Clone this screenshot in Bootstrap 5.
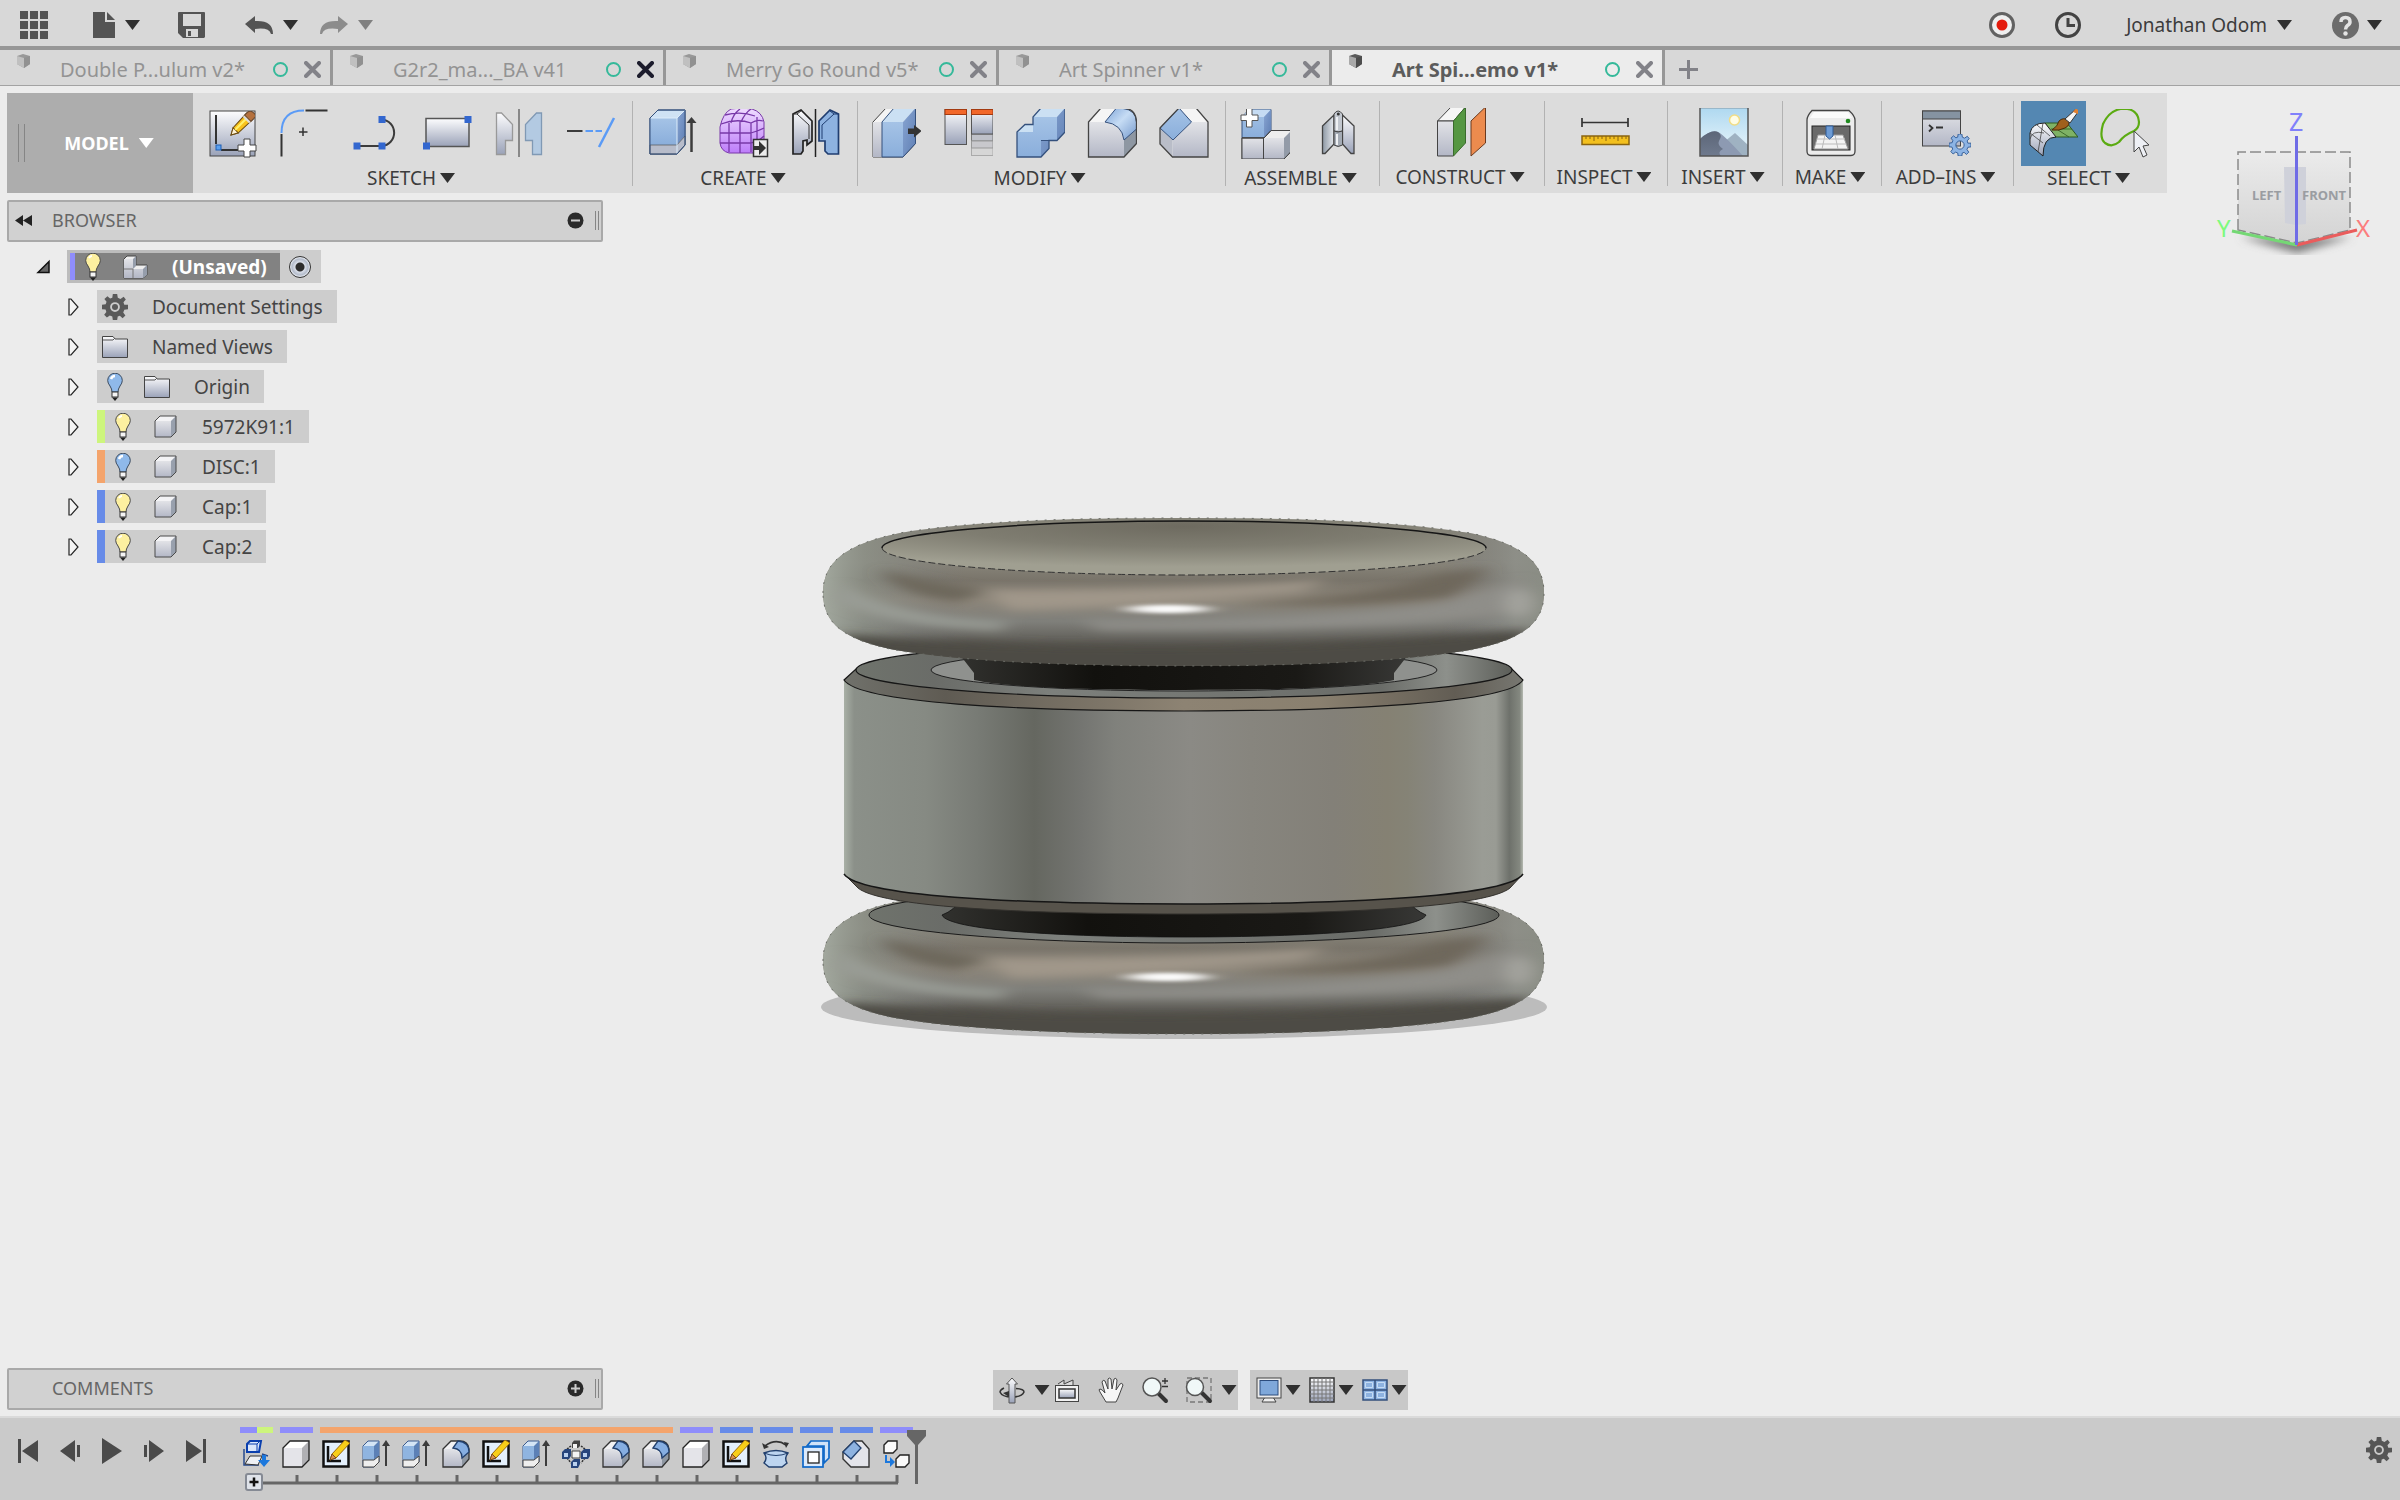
<!DOCTYPE html>
<html lang="en">
<head>
<meta charset="utf-8">
<meta name="viewport" content="width=device-width, initial-scale=1">
<title>Art Spinner Demo v1</title>
<link href="https://cdn.jsdelivr.net/npm/bootstrap@5.3.0/dist/css/bootstrap.min.css" rel="stylesheet">
<style>
  body { font-family: "Noto Sans", "Open Sans", sans-serif; font-size: 19px; line-height: 24px; color: #3c3c3c; background: #ececec; }
  svg { display: block; overflow: visible; flex: none; }
  .plain { padding: 0; border: 0; background: none; color: inherit; font: inherit; line-height: 24px; }
  .tri { width: 15px; height: 10px; background: #303030; clip-path: polygon(0 0, 100% 0, 50% 100%); flex: none; }
  .tri-faint { background: #808080; }
  .tri-apart { margin-left: 10px; }

  .app-bar { height: 50px; background: #d8d8d8; border-bottom: 4px solid #979797; padding: 4px 18px 0 20px; }
  .gap-file { margin-left: 45px; }
  .gap-save { margin-left: 38px; }
  .gap-undo { margin-left: 40px; }
  .gap-redo { margin-left: 22px; }

  .doc-tabs { height: 36px; background: #d8d8d8; border-bottom: 1px solid #a3a3a3; font-size: 20px; color: #939393; }
  .doc-tab { flex: 0 1 333px; min-width: 0; padding: 4px 9px 0 17px; border-right: 3px solid #979797; }
  .doc-tab.current { background: #ececec; color: #5c5c5c; font-weight: 700; }
  .doc-tab .cube { align-self: flex-start; opacity: .5; }
  .doc-tab.current .cube { opacity: 1; }
  .doc-tab a { color: inherit; text-decoration: none; margin-left: 30px; white-space: nowrap; }
  .sync { width: 15px; height: 15px; border: 2px solid #35b99a; border-radius: 50%; margin-right: 16px; flex: none; }
  .close-x { color: #828288; }
  .close-dark { color: #1c1c2c; }
  .new-tab { color: #828288; margin-left: 14px; padding-top: 4px; }

  .stage { min-height: 0; padding: 7px 7px 6px; }
  .ribbon { align-self: flex-start; height: 100px; background: #dcdcdc; }
  .workspace { width: 186px; background: #adadad; padding-left: 11px; color: #fff; font-size: 18px; font-weight: 700; }
  .workspace .tri { background: #fff; }
  .grip { width: 7px; height: 38px; border: solid #858585; border-width: 0 1px; }
  .tools { padding: 8px 3px 4px 0; position: relative; }
  .tools + .tools::before { content: ""; position: absolute; left: 0; top: 8px; width: 1px; height: 85px; background: #b2b2b2; }
  .tool { width: 65px; height: 65px; margin: 0 3px 0 4px; }
  .tool.on { background: #5487b2; }
  .tool svg { width: 50px; height: 50px; margin: auto; }
  .w-sketch { width: 439px; } .w-create { width: 225px; } .w-modify { width: 368px; }
  .w-pair { width: 154px; } .w-construct { width: 165px; } .w-inspect { width: 123px; }
  .w-insert { width: 115px; } .w-make { width: 99px; } .w-addins { width: 132px; }

  .view-cube { position: absolute; right: 25px; top: 20px; }
  .model { position: absolute; left: calc(50% - 400px); top: calc(50% - 245px); }

  .browser-pane { margin-top: 7px; }
  .palette { width: 596px; height: 42px; background: #d1d1d1; border: 2px solid #a9a9a9; border-radius: 2px; color: #666; font-size: 18px; padding: 0 2px 2px 6px; }
  .palette-name { width: 37px; }
  .palette .grip { width: 4px; height: 19px; margin-left: 11px; }

  .tree { margin: 8px 0 0 30px; gap: 7px; }
  .tree-row { height: 33px; }
  .kids { margin-left: 31px; }
  .chip { height: 33px; background: #cdcdcd; padding-right: 14px; color: #444; }
  .twist { width: 29px; }
  .twist-root { width: 30px; }
  .slot { width: 26px; margin-left: 5px; display: flex; justify-content: center; }
  .slot + .slot { margin-left: 16px; }
  .chip-text { margin-left: 24px; white-space: nowrap; }
  .stripe { width: 8px; align-self: stretch; }
  .root-chip { background: #bcbcbc; padding: 3px 0 3px 3px; height: 33px; }
  .root-name { background: #828282; color: #fff; font-weight: 700; height: 27px; padding-right: 13px; }
  .root-name .stripe { width: 5px; }
  .root-end { background: #cdcdcd; width: 41px; height: 33px; }
  .activate { appearance: none; width: 22px; height: 22px; margin: 0; border: 1px solid #333; border-radius: 50%; background: radial-gradient(circle, #2d2d2d 0 4px, #d9dee8 5px, #b4bccb 8px, #eef1f6 10px); }
  .c-violet { background: #8f8dfb; } .c-lime { background: #cdf57d; }
  .c-orange { background: #f4a46c; } .c-blue { background: #678be8; }

  .dock { display: grid; grid-template-columns: 1fr auto 1fr; align-items: end; }
  .nav-strip { height: 40px; background: #c8c8c8; padding: 0 1px 0 6px; }
  .nav-strip svg { width: 26px; height: 26px; }
  .nav-step { margin-left: 18px; }

  .history { height: 84px; background: #cacaca; border-top: 2px solid #dadada; padding: 0 8px 0 18px; }
  .play { gap: 22px; margin-top: 21px; color: #4a4a4a; }
  .timeline { margin-left: 34px; position: relative; padding-top: 9px; }
  .bars { gap: 7px; height: 6px; }
  .bars > div { width: 33px; }
  .bars > .span-nine { width: 353px; }
  .steps { margin-top: 7px; height: 28px; }
  .steps button { width: 40px; padding-left: 2px; }
  .marker { position: absolute; left: 667px; top: 12px; }
  .gear-btn { margin: 19px 0 0 auto; align-self: flex-start; }
</style>
</head>
<body class="vh-100 d-flex flex-column overflow-hidden">

<svg width="0" height="0" class="position-absolute" aria-hidden="true">
  <defs>
    <linearGradient id="gSteel" x1="0" y1="0" x2="0" y2="1"><stop offset="0" stop-color="#fdfdfe"/><stop offset="1" stop-color="#9aa2b8"/></linearGradient>
    <linearGradient id="gGrey" x1="0" y1="0" x2="0" y2="1"><stop offset="0" stop-color="#e2e3e7"/><stop offset="1" stop-color="#b3b7c6"/></linearGradient>
    <linearGradient id="gBlue" x1="0" y1="0" x2="0" y2="1"><stop offset="0" stop-color="#a5c3e6"/><stop offset="1" stop-color="#8aaedb"/></linearGradient>
    <linearGradient id="gBlueSide" x1="0" y1="0" x2="1" y2="1"><stop offset="0" stop-color="#88a5d2"/><stop offset="1" stop-color="#5f7fb4"/></linearGradient>
    <linearGradient id="gPurple" x1="0" y1="0" x2="0" y2="1"><stop offset="0" stop-color="#efdcff"/><stop offset="1" stop-color="#bd7dfa"/></linearGradient>
    <linearGradient id="gSky" x1="0" y1="0" x2="0" y2="1"><stop offset="0" stop-color="#aed8f0"/><stop offset="1" stop-color="#eef8fc"/></linearGradient>
    <linearGradient id="gHill" x1="0" y1="0" x2="0" y2="1"><stop offset="0" stop-color="#5c6678"/><stop offset="1" stop-color="#6f7a8e"/></linearGradient>
    <linearGradient id="gWing"><stop offset="0" stop-color="#8d98a4"/><stop offset="1" stop-color="#e6e9ee"/></linearGradient>
    <linearGradient id="gFillet" x1="0" y1="0" x2="1" y2="1"><stop offset="0" stop-color="#7fa5d8"/><stop offset=".45" stop-color="#c6dcf4"/><stop offset="1" stop-color="#7398cc"/></linearGradient>

    <symbol id="cube12" viewBox="0 0 13 14"><path d="M0 2 6 0 13 2V10L7 14 0 10Z" fill="#5a5a5a"/><path d="M0 2 7 4V14L0 10Z" fill="#a9a9a9"/><path d="M7 4 13 2V10L7 14Z" fill="#4d4d4d"/></symbol>
    <symbol id="xmark" viewBox="0 0 17 17"><path d="M2 2 15 15M15 2 2 15" stroke="currentColor" stroke-width="4" stroke-linecap="round"/></symbol>

    <symbol id="pencil" viewBox="0 0 24 24"><path d="M1 23 3 16 16 2 22 8 8 21Z" fill="#f8c21c" stroke="#6b4a10"/><path d="M1 23 3 16 8 21Z" fill="#fff3d4" stroke="#6b4a10"/><path d="M5 18 18 5" stroke="#fff06a" stroke-width="2"/><path d="M14 4 17 1Q20-1 23 2T23 7L20 10Z" fill="#b5713e" stroke="#6b4a30"/><path d="M13 5 19 11" stroke="#ddd" stroke-width="2"/></symbol>

    <symbol id="newSketch" viewBox="0 0 50 50"><rect x="3" y="2" width="45" height="45" fill="url(#gSteel)" stroke="#444"/><path d="M9 6V35M14 41H33" stroke="#333" stroke-width="2"/><rect x="9" y="36" width="5" height="5" fill="#5aa0ef" stroke="#1f5eb4"/><use href="#pencil" x="23" y="2" width="25" height="25"/><path d="M37 30H43V36H49V42H43V48H37V42H31V36H37Z" fill="#fff" stroke="#444"/></symbol>
    <symbol id="filletLine" viewBox="0 0 50 50"><path d="M2.500 24Q2.500 1.500 25 1.500" fill="none" stroke="#5b9bf6" stroke-width="2"/><path d="M26.500 1.500H48.500M2.500 25V47.500" stroke="#333" stroke-width="2"/><path d="M20 23H28.500M24 18.500V27" stroke="#333" stroke-width="1.500"/></symbol>
    <symbol id="lineTool" viewBox="0 0 50 50"><path d="M6 37H31A13.300 13.300 0 0 0 31 10.500" fill="none" stroke="#3c3c3c" stroke-width="2"/><path d="M2.500 33.500h7v7h-7zM27.500 33.500h7v7h-7zM27.500 7h7v7h-7z" fill="#3367cf"/></symbol>
    <symbol id="rectTool" viewBox="0 0 50 50"><rect x="3" y="9.500" width="43" height="28" fill="url(#gSteel)" stroke="#555" stroke-width="1.500"/><path d="M41.500 7h7v7h-7zM0 33.500h7v7h-7z" fill="#3367cf"/></symbol>
    <symbol id="mirrorFlat" viewBox="0 0 50 50"><path d="M1.500 4H6.500L17.500 15.500V31.500H10.500V45.500H1.500Z" fill="url(#gSteel)" stroke="#999" stroke-width="1.300"/><path d="M46.500 4H41.500L30.500 15.500V31.500H37.500V45.500H46.500Z" fill="#b3cae2" stroke="#8099b4" stroke-width="1.300"/><path d="M24 0V48" stroke="#888" stroke-width="2"/></symbol>
    <symbol id="trimTool" viewBox="0 0 50 50"><path d="M-1 22H15.500" stroke="#3c3c3c" stroke-width="2"/><path d="M18.500 22H26M28.500 22H35" stroke="#5b9bf6" stroke-width="2"/><path d="M47 9 32 38" stroke="#5b9bf6" stroke-width="2.500"/></symbol>

    <symbol id="extrude" viewBox="0 0 50 50"><path d="M3 9 11 1H38V36L30 45H3Z" fill="#cfe2f4" stroke="#34507c"/><path d="M3 9H30V36H3Z" fill="url(#gBlue)"/><path d="M30 9 38 1V27L30 36Z" fill="url(#gBlueSide)"/><path d="M3 36H30L38 27V36L30 45H3Z" fill="#b7bcca" stroke="#555" stroke-width=".7"/><path d="M3 9H30V45M30 9 38 1" fill="none" stroke="#dcecfa"/><path d="M3 9 11 1H38V36L30 45H3Z" fill="none" stroke="#34507c"/><path d="M44.500 43V12" stroke="#3c3c3c" stroke-width="2.500"/><path d="M39.500 14 44.500 8 49.500 14Z" fill="#3c3c3c"/></symbol>
    <symbol id="form" viewBox="0 0 50 50"><path d="M1 18Q4 4 12 0Q22-2 33 0Q43 3 45 13V34Q43 42 35 44H10Q2 42 1 34Z" fill="url(#gPurple)" stroke="#7838a8"/><path d="M2 15Q18 9 32 14Q38 10 44 12M6 6Q22 2 36 7M12 14Q14 5 21 0M22 13Q26 4 32 0M10 14V43M21 12V44M32 14V43M1 24H32Q39 22 45 19M1 34H32Q40 32 45 27M38 8V41" fill="none" stroke="#7838a8" stroke-width="1.300"/><rect x="34.500" y="30.500" width="14" height="17" fill="#ececec" stroke="#333" stroke-width="1.500"/><path d="M34 37H40V32L47 39 40 46V41H34Z" fill="#333"/></symbol>
    <symbol id="mirror3d" viewBox="0 0 50 50"><path d="M2 5 10 1 21 12V32L16 36V31L12 32V42L10 45H2Z" fill="url(#gSteel)" stroke="#222" stroke-width="1.700"/><path d="M6 5 18 16V30M10 2 6 5H2" fill="none" stroke="#333"/><path d="M47.500 5 39 1 28 12V32H34V42L37 45H47.500Z" fill="#8db2e0" stroke="#1f3d70" stroke-width="1.700"/><path d="M43 5 31 16V30M39 2 43 5H47" fill="none" stroke="#1f3d70"/><path d="M24.500 0V48" stroke="#222" stroke-width="1.500"/></symbol>

    <symbol id="pressPull" viewBox="0 0 50 50"><path d="M2 13 15-1H44.500V34.500L32 48H2Z" fill="#f4f4f4" stroke="#444"/><path d="M2 13H11V48H2Z" fill="url(#gGrey)"/><path d="M11 13 23-1H44.500L32 13Z" fill="#cbe0f3"/><path d="M11 13H32V48H11Z" fill="url(#gBlue)"/><path d="M32 13 44.500-1V34.500L32 48Z" fill="url(#gBlueSide)"/><path d="M11 48V13L23-1H44.500V34.500L32 48Z" fill="none" stroke="#34507c"/><path d="M37 19.500H43V16L50.500 22 43 28.500V25H37Z" fill="#333"/></symbol>
    <symbol id="pattern" viewBox="0 0 50 50"><rect x="2" y=".5" width="21.500" height="35" fill="url(#gSteel)" stroke="#555"/><rect x="2" y=".5" width="21.500" height="5" fill="#f2672a" stroke="#a33a10"/><rect x="28.500" y=".5" width="21.500" height="46" fill="#d6d6d6" stroke="#aaa"/><rect x="28.500" y="25" width="21.500" height="7" fill="#bfc1c9" stroke="#777"/><rect x="28.500" y="32" width="21.500" height="7" fill="#c8c8cc" stroke="#999"/><rect x="28.500" y=".5" width="21.500" height="24.500" fill="url(#gSteel)" stroke="#555"/><rect x="28.500" y=".5" width="21.500" height="5" fill="#f2672a" stroke="#a33a10"/></symbol>
    <symbol id="combine" viewBox="0 0 50 50"><path d="M2 23 10 15.500H18V8L26-1H50V23L42 31.500H34V39.500L26 48H2Z" fill="#cbe0f3"/><path d="M18 8H42V31.500H26V48H2V23H18Z" fill="url(#gBlue)"/><path d="M42 8 50-1V23L42 31.500ZM26 31.500H34V39.500L26 48Z" fill="url(#gBlueSide)"/><path d="M2 23 10 15.500H18V8L26-1H50V23L42 31.500H34V39.500L26 48H2Z" fill="none" stroke="#34507c" stroke-width="1.300"/><path d="M26 31.500H34" stroke="#34507c"/></symbol>
    <symbol id="fillet3d" viewBox="0 0 50 50"><path d="M1.500 13 14-1H35Q49-1 49.500 13V34.500L37 48H1.500Z" fill="#f5f5f5"/><path d="M1.500 13H18Q35 15 37 31V48H1.500Z" fill="url(#gGrey)"/><path d="M37 31 49.500 19V34.500L37 48Z" fill="#8e97a2"/><path d="M18 13 29-.5H36Q49 1 49.500 13V20L37 31Q35 15 18 13Z" fill="url(#gFillet)" stroke="#34507c"/><path d="M1.500 13 14-1H35Q49-1 49.500 13V34.500L37 48H1.500Z" fill="none" stroke="#444" stroke-width="1.300"/></symbol>
    <symbol id="chamfer3d" viewBox="0 0 50 50"><path d="M1 19 20-1H37L49 13V48H13.500L1 35Z" fill="#f5f5f5"/><path d="M32.500 13H49V48H13.500V31Z" fill="url(#gGrey)"/><path d="M1 19 13.500 31V48L1 35Z" fill="#b9bdc8"/><path d="M1 19 20-1 32.500 13 14 31Z" fill="url(#gBlue)" stroke="#34507c"/><path d="M1 19 20-1H37L49 13V48H13.500L1 35Z" fill="none" stroke="#444" stroke-width="1.300"/></symbol>

    <symbol id="component" viewBox="0 0 50 50"><path d="M2 8 9 .5H31V22L24 29H2Z" fill="url(#gBlue)" stroke="#34507c"/><path d="M2 8 9 .5H31L24 8Z" fill="#c6dcf3"/><path d="M24 8 31 .5V22L24 29Z" fill="url(#gBlueSide)"/><path d="M24 29 31 21.500H51.500V42L44 50H2V29Z" fill="#eee" stroke="#444"/><path d="M2 29H44V50H2Z" fill="url(#gGrey)"/><path d="M44 29 51.500 21.500V42L44 50Z" fill="#939ba8"/><path d="M23.500 29V50M2 29H24" stroke="#444"/><path d="M2 29H24L31 21.500H51.500V42L44 50H2Z" fill="none" stroke="#444"/><path d="M6.500-.5H12V6H18V11.500H12V18H6.500V11.500H1V6H6.500Z" fill="#fff" stroke="#555"/></symbol>
    <symbol id="joint" viewBox="0 0 50 50"><path d="M10.500 17 22 6V35L13 44.500H10.500Z" fill="url(#gWing)" stroke="#444" stroke-width="1.300"/><path d="M42 17 30.500 6V35L39 44.500H42Z" fill="url(#gSteel)" stroke="#444" stroke-width="1.300"/><path d="M22 5Q26-1 30.500 5V22Q26 24 22 22Z" fill="#c2c7cf" stroke="#444"/><path d="M22 22Q26 24 30.500 22V36Q26 39 22 36Z" fill="#a4abb5" stroke="#444"/><path d="M25 8V21M25 25V36" stroke="#eef0f3" stroke-width="2"/><circle cx="26.300" cy="5" r="1.500" fill="#333"/></symbol>
    <symbol id="planes" viewBox="0 0 50 50"><path d="M1.500 13 15-1H29.500L17.500 13Z" fill="#f6f6f6" stroke="#444"/><path d="M1.500 13H17.500V48H1.500Z" fill="url(#gGrey)" stroke="#444"/><path d="M17.500 13 29.500-1V35L17.500 48Z" fill="#559742" stroke="#3a6b2c"/><path d="M35 13 49.500-1V35L35 48Z" fill="#ec8b4e" stroke="#6a3a20"/></symbol>
    <symbol id="measure" viewBox="0 0 50 50"><path d="M2 14.500H48M2 10V19M48 10V19" stroke="#333" stroke-width="1.700"/><rect x="2" y="28" width="47" height="8.500" fill="#f3c01e" stroke="#8a6410" stroke-width="1.500"/><path d="M6 28V31M10 28V31M14 28V33M18 28V31M22 28V31M26 28V33M30 28V31M34 28V31M38 28V33M42 28V31M46 28V31" stroke="#8a6410"/></symbol>
    <symbol id="picture" viewBox="0 0 50 50"><rect x="1" y="-.5" width="48" height="48.500" fill="url(#gSky)"/><circle cx="35.500" cy="12" r="5" fill="#fffde6" stroke="#f2dd85" stroke-width="1.500"/><path d="M25 34 36 25 49 37V48H30Z" fill="#9fb2c2"/><path d="M1 31Q12 21 19 24Q24 26 44 48H1Z" fill="#8d9ab2"/><path d="M1 31Q12 21 19 24Q24 27 20 33Q18 37 24 41 18 44 22 48H1Z" fill="url(#gHill)"/><rect x="1" y="-.5" width="48" height="48.500" fill="none" stroke="#555" stroke-width="1.500"/></symbol>
    <symbol id="printer" viewBox="0 0 50 50"><path d="M1 12Q1 8 6 2.500H43Q49 8 49 12V43Q49 47.500 45 47.500H5Q1 47.500 1 43Z" fill="#ececec" stroke="#444" stroke-width="1.300"/><path d="M4 10 8 4H42L46 10" fill="#fbfbfb"/><circle cx="42" cy="13" r="2.300" fill="#1f8a1f"/><rect x="6" y="18" width="38" height="24" fill="#6a6a6a" stroke="#222"/><path d="M12 27H37L42 41H8Z" fill="#f3f3f3" stroke="#999"/><path d="M11 31H39M10 36H40M19 27 16 41M29 27 32 41" stroke="#bbb"/><path d="M20 18H27V28L23.500 31 20 28Z" fill="#6d9bd4" stroke="#2f5a95"/></symbol>
    <symbol id="cog" viewBox="0 0 24 24"><path fill-rule="evenodd" d="M10 0H14L14.600 3.500 17 4.500 20 2.500 22 5 19.800 7.500 20.600 10H24V14L20.600 14.500 19.600 17 21.600 19.800 19 22.300 16.500 20 14.500 20.700 14 24H10L9.500 20.700 7.200 19.800 4.500 21.800 2 19.200 4 16.500 3.300 14.300 0 14V10L3.400 9.500 4.200 7.200 2.200 4.500 5 2 7.500 4.200 9.500 3.400ZM12 7.500A4.500 4.500 0 1 0 12 16.500 4.500 4.500 0 1 0 12 7.500Z"/></symbol>
    <symbol id="script" viewBox="0 0 50 50"><rect x="1.500" y="3" width="38" height="35" fill="url(#gGrey)" stroke="#444"/><rect x="1.500" y="3" width="38" height="8" fill="#8593a1" stroke="#444"/><path d="M8 17 11.500 20 8 23.500M15 19.500H22" fill="none" stroke="#333" stroke-width="1.800"/><use href="#cog" x="28" y="26" width="22" height="22" fill="#8db4e4" stroke="#2f5a95"/></symbol>
    <symbol id="paint" viewBox="0 0 50 50"><path d="M17 14H39L50 28H27Z" fill="#7fb265" stroke="#2f5a20"/><path d="M30 21 41 28M23 20H44" stroke="#2f5a20" stroke-width=".8"/><path d="M2 24Q4 14 17 14L28 28Q15 28 15 47L2 36Z" fill="url(#gSteel)" stroke="#222"/><path d="M2 30Q4 21 16 24M2 24 15 34M9 16 22 27M15 14 10 43" fill="none" stroke="#444" stroke-width=".8"/><path d="M24 21Q30 17 31 12Q35 8 40 11Q43 16 37 19Q31 22 24 21Z" fill="#a0601c" stroke="#4a2a08"/><path d="M37 10 48 0 50 3 42 14Z" fill="#f4f4f4" stroke="#333"/><path d="M45 3 48-1 50 1V5Z" fill="#e08030"/></symbol>
    <symbol id="lasso" viewBox="0 0 50 50"><path d="M34 22Q39 19 39 13Q38 0 24-.3Q10 0 3 15Q-1 29 5 34Q12 39 19 33Q24 26 34 22Z" fill="none" stroke="#5bab12" stroke-width="2.200"/><path d="M34 22V43L39 38 43 48 47 46 43 37 49 36Z" fill="#eef0f5" stroke="#444"/></symbol>

    <symbol id="bulbOn" viewBox="0 0 16 28"><path d="M5 19Q5 16 3 13Q.7 10 .7 7.500A7.300 7.300 0 0 1 15.300 7.500Q15.300 10 13 13Q11 16 11 19Z" fill="#fdf0a0" stroke="#4a4a4a"/><path d="M4 5Q5 3 7 3" stroke="#fff" stroke-width="2" fill="none"/><rect x="5" y="19" width="6" height="5" fill="#f4f4f4" stroke="#333"/><path d="M5 24.500H11L8 28Z" fill="#222"/></symbol>
    <symbol id="bulbOff" viewBox="0 0 16 28"><path d="M5 19Q5 16 3 13Q.7 10 .7 7.500A7.300 7.300 0 0 1 15.300 7.500Q15.300 10 13 13Q11 16 11 19Z" fill="#8fb9ea" stroke="#3c4c60"/><path d="M4 6Q5 3 8 3" stroke="#fff" stroke-width="2.500" fill="none"/><rect x="5" y="19" width="6" height="5" fill="#f4f4f4" stroke="#333"/><path d="M5 24.500H11L8 28Z" fill="#222"/></symbol>
    <symbol id="folder" viewBox="0 0 26 22"><path d="M.5 21.500V.5H11L13 3H25.500V21.500Z" fill="url(#gSteel)" stroke="#444"/><path d="M1 4H11L13 2" fill="none" stroke="#555"/></symbol>
    <symbol id="box" viewBox="0 0 23 23"><path d="M1 6 6 1H22V17L17 22H1Z" fill="#f3f3f5"/><path d="M1 6H17V22H1Z" fill="url(#gGrey)"/><path d="M17 6 22 1V17L17 22Z" fill="#98a0ad"/><path d="M1 6 6 1H22V17L17 22H1Z" fill="none" stroke="#4a4a4a"/></symbol>
    <symbol id="assembly" viewBox="0 0 25 24"><path d="M1 4 4 1H13V10H24V20L20 23H1Z" fill="#eee" stroke="#444"/><path d="M1 4H10V14H20V23H1Z" fill="url(#gGrey)"/><path d="M10 4 13 1V11L10 14ZM20 14 24 10V20L20 23Z" fill="#959dab"/><path d="M10 14V23M1 14H10" stroke="#777"/></symbol>
    <symbol id="twistShut" viewBox="0 0 11 18"><path d="M1 1H3L10 9 3 17H1Z" fill="#f4f4f4" stroke="#222" stroke-width="1.200"/></symbol>

    <symbol id="tInsert" viewBox="0 0 28 28"><path d="M8 1H19L17 12H5V4Z" fill="#dbe7fb" stroke="#0a3fae" stroke-width="2"/><path d="M5 4H15V12M15 4 18 1" fill="none" stroke="#0a3fae"/><path d="M2 9V25H17M20 14 26 16" fill="none" stroke="#274a8c" stroke-width="1.500"/><path d="M3 24 8 16H20L16 25Z" fill="#eef0f4" stroke="#333"/><path d="M20 15H24V20H28L22 27 16 20H20Z" fill="#1c78dd"/></symbol>
    <symbol id="tBox" viewBox="0 0 28 28"><path d="M1 8 8 1H27V20L20 27H1Z" fill="#fff"/><path d="M1 8H20V27H1Z" fill="#e4e4e9"/><path d="M20 8 27 1V20L20 27Z" fill="#b0b0b4"/><path d="M1 8 8 1H27V20L20 27H1Z" fill="none" stroke="#222" stroke-width="1.300"/></symbol>
    <symbol id="tSketch" viewBox="0 0 28 28"><rect x="1.500" y="1.500" width="25" height="25" fill="#e3effc" stroke="#111" stroke-width="2.500"/><path d="M6 6V21H19" fill="none" stroke="#111" stroke-width="2.500"/><path d="M8 20 10 14 23 0 28 3 14 18Z" fill="#f8ce18" stroke="#9a6a10"/><path d="M8 20 10 14 14 18Z" fill="#d89050" stroke="#7a4a20"/></symbol>
    <symbol id="tExtrude" viewBox="0 0 28 28"><path d="M1 6 6 1H17V22L12 27H1Z" fill="#d4e4f5" stroke="#3a5a90"/><path d="M1 6H12V20H1Z" fill="#8fb4e0"/><path d="M12 6 17 1V16L12 20Z" fill="#5c80b6"/><path d="M1 20H12L17 16V22L12 27H1Z" fill="#eee" stroke="#444"/><path d="M24 26V5" stroke="#3c3c3c" stroke-width="2"/><path d="M20 6 24 0 28 6Z" fill="#3c3c3c"/></symbol>
    <symbol id="tFillet" viewBox="0 0 28 28"><path d="M1 9 9 1H18Q26 1 27 9V19L20 27H1Z" fill="#f2f2f4"/><path d="M1 9H11Q20 12 20 19V27H1Z" fill="url(#gGrey)"/><path d="M20 18 27 11V19L20 27Z" fill="#8e97a2"/><path d="M1 9 9 1H18Q26 1 27 9V19L20 27H1Z" fill="none" stroke="#333" stroke-width="1.300"/><path d="M11 8 16 1Q27 2 27 12L20 18Q20 9 11 8Z" fill="#86aee2" stroke="#22406e" stroke-width="1.300"/></symbol>
    <symbol id="tPattern" viewBox="0 0 28 28"><path d="M5 18 9 23M23 18 19 23M5 9 9 6M23 9 19 6" fill="none" stroke="#333" stroke-width="1.500" stroke-dasharray="2 1"/><path d="M10 3 12 .5H18V6L16 8H10Z" fill="#444"/><path d="M11 4H15V8H11Z" fill="#f4f4f4"/><path d="M10 11H18V18H10Z" fill="#f4f4f4" stroke="#444"/><path d="M0 12 3 9H9V16L7 19H0ZM19 12 22 9H28V16L26 19H19ZM9 22 12 19H18V24L16 28H9Z" fill="#27457c"/><path d="M2 13H6V17H2ZM21 13H25V17H21ZM11 22H15V26H11Z" fill="#b9d0ee"/></symbol>
    <symbol id="tRevolve" viewBox="0 0 28 28"><path d="M3 6Q14-2 24 5" fill="none" stroke="#333" stroke-width="1.700"/><path d="M0 3 2 9 7 7ZM22 2 27 3 24 8Z" fill="#333"/><path d="M2 13Q14 8 26 13Q22 18 25 23L20 27H7L2 23Q6 18 2 13Z" fill="#bdd5f0" stroke="#22406e" stroke-width="1.400"/><path d="M2 13Q14 18 26 13" fill="none" stroke="#22406e"/></symbol>
    <symbol id="tShell" viewBox="0 0 28 28"><path d="M9 1H27V18L22 23V6H5Z" fill="#cfe2f8" stroke="#0f68c8" stroke-width="1.700"/><rect x="1" y="7" width="20" height="20" fill="#dceafb" stroke="#0f68c8" stroke-width="1.700"/><rect x="6" y="12" width="11" height="11" fill="#fff" stroke="#222" stroke-width="1.300"/></symbol>
    <symbol id="tChamfer" viewBox="0 0 28 28"><path d="M1 12 12 1H20L27 9V27H9L1 19Z" fill="#e3e4ea" stroke="#333" stroke-width="1.400"/><path d="M1 12 12 1 19 8 9 19Z" fill="#8db2e0" stroke="#22406e" stroke-width="1.300"/></symbol>
    <symbol id="tMove" viewBox="0 0 28 28"><path d="M2 5 6 1H15V9L11 13H2Z" fill="#fafafa" stroke="#222" stroke-width="1.400"/><path d="M14 19 18 15H27V23L23 27H14Z" fill="#fafafa" stroke="#222" stroke-width="1.400"/><path d="M4 15V22H9" fill="none" stroke="#1c78dd" stroke-width="2"/><path d="M8 17 13 22 8 27Z" fill="#1c78dd"/></symbol>

    <clipPath id="discClip"><path id="discShape" d="M823 593C823 562 846 544 900 533C980 520 1080 518 1183 518C1290 518 1390 520 1470 533C1522 544 1544 562 1544 593C1544 625 1520 640 1470 650C1400 662 1290 666 1183 666C1076 666 960 662 890 649C845 639 823 624 823 593Z"/></clipPath>
    <linearGradient id="gDisc" gradientUnits="userSpaceOnUse" x1="0" y1="518" x2="0" y2="666"><stop offset="0" stop-color="#858377"/><stop offset=".3" stop-color="#88857a"/><stop offset=".42" stop-color="#79746a"/><stop offset=".55" stop-color="#8d867a"/><stop offset=".7" stop-color="#7f7f7a"/><stop offset=".85" stop-color="#5c5a54"/><stop offset="1" stop-color="#4a4841"/></linearGradient>
    <linearGradient id="gRim" gradientUnits="userSpaceOnUse" x1="822" y1="0" x2="1544" y2="0"><stop offset="0" stop-color="#a3a99f"/><stop offset=".06" stop-color="#8e938a" stop-opacity=".7"/><stop offset=".2" stop-color="#777" stop-opacity="0"/><stop offset=".86" stop-color="#777" stop-opacity="0"/><stop offset=".96" stop-color="#8f918b" stop-opacity=".8"/><stop offset="1" stop-color="#8a8d84"/></linearGradient>
    <radialGradient id="gBowl" cx=".5" cy=".1" r=".75"><stop offset="0" stop-color="#6e6b60"/><stop offset=".5" stop-color="#7f7d71"/><stop offset="1" stop-color="#a09f91"/></radialGradient>
    <linearGradient id="gWall"><stop offset="0" stop-color="#a9b0a6"/><stop offset=".015" stop-color="#8b9089"/><stop offset=".12" stop-color="#868a83"/><stop offset=".2" stop-color="#777a74"/><stop offset=".28" stop-color="#656760"/><stop offset=".35" stop-color="#747571"/><stop offset=".4" stop-color="#80817c"/><stop offset=".51" stop-color="#8b8a85"/><stop offset=".6" stop-color="#87857e"/><stop offset=".72" stop-color="#838078"/><stop offset=".8" stop-color="#858173"/><stop offset=".83" stop-color="#858376"/><stop offset=".87" stop-color="#888780"/><stop offset=".94" stop-color="#9a9c95"/><stop offset=".96" stop-color="#999b94"/><stop offset=".98" stop-color="#6e716b"/><stop offset=".995" stop-color="#848880"/><stop offset="1" stop-color="#b4b9b0"/></linearGradient>
    <linearGradient id="gChamfer"><stop offset="0" stop-color="#70716b"/><stop offset=".15" stop-color="#5f5b53"/><stop offset=".5" stop-color="#8d8373"/><stop offset=".7" stop-color="#8a806f"/><stop offset=".9" stop-color="#625d54"/><stop offset="1" stop-color="#777771"/></linearGradient>
    <linearGradient id="gFace"><stop offset="0" stop-color="#6f736c"/><stop offset=".12" stop-color="#6a6c68"/><stop offset=".3" stop-color="#7d807c"/><stop offset=".8" stop-color="#6a6c68"/><stop offset=".9" stop-color="#8d908b"/><stop offset="1" stop-color="#5c5e59"/></linearGradient>
    <linearGradient id="gStem"><stop offset="0" stop-color="#31312e"/><stop offset=".3" stop-color="#12110e"/><stop offset=".75" stop-color="#1a1916"/><stop offset="1" stop-color="#383836"/></linearGradient>
    <filter id="soft" x="-30%" y="-100%" width="160%" height="300%"><feGaussianBlur stdDeviation="9 4"/></filter>
    <filter id="glow" x="-30%" y="-100%" width="160%" height="300%"><feGaussianBlur stdDeviation="12 2"/></filter>
    <g id="disc">
      <g clip-path="url(#discClip)">
        <rect x="815" y="510" width="735" height="165" fill="url(#gDisc)"/>
        <rect x="815" y="510" width="735" height="165" fill="url(#gRim)"/>
        <g filter="url(#soft)">
          <path d="M880 570Q920 580 985 590L960 602Q900 596 880 570Z" fill="#6d675c"/>
          <path d="M985 590Q1180 592 1330 580L1300 592Q1130 608 1010 610Z" fill="#a0978a"/>
          <path d="M1230 603Q1370 598 1440 574L1490 568 1450 598Q1340 610 1230 603Z" fill="#6e675c"/>
          <path d="M840 585Q900 618 1010 622L1000 630Q880 625 835 600Z" fill="#999c95"/>
          <path d="M1080 620Q1300 622 1440 603L1525 580V610Q1400 632 1100 630Z" fill="#8f8e89"/>
          <ellipse cx="1519" cy="603" rx="14" ry="14" fill="#a3a39d"/>
          <path d="M840 634Q1180 660 1530 629L1500 680H860Z" fill="#4e4c45"/>
        </g>
        <ellipse cx="1168" cy="609" rx="42" ry="3" fill="#fff" filter="url(#glow)"/>
        <ellipse cx="1168" cy="609" rx="32" ry="3" fill="#fff" filter="url(#glow)"/>
      </g>
      <use href="#discShape" fill="none" stroke="#6b6d67" stroke-width="1" stroke-dasharray="2 7"/>
    </g>
  </defs>
</svg>

<header class="app-bar d-flex align-items-center">
  <button class="plain" aria-label="Data panel"><svg width="28" height="28" fill="#545454"><path d="M0 0h8v8H0zM10 0h8v8h-8zM20 0h8v8h-8zM0 10h8v8H0zM10 10h8v8h-8zM20 10h8v8h-8zM0 20h8v8H0zM10 20h8v8h-8zM20 20h8v8h-8z"/></svg></button>
  <button class="plain gap-file d-flex align-items-center" aria-label="File"><svg width="22" height="26" fill="#545454"><path d="M0 0H12V10H22V26H0ZM14 0 22 8H14Z"/></svg><span class="tri tri-apart"></span></button>
  <button class="plain gap-save" aria-label="Save"><svg width="27" height="26"><path d="M0 1Q0 0 1 0H26Q27 0 27 1V25L26 26H5L0 21Z" fill="#545454"/><path d="M5 2H23V14H5Z" fill="#d8d8d8"/><path d="M8 17H20V25H8Z" fill="#d8d8d8"/><path d="M10 19H13V24H10Z" fill="#545454"/></svg></button>
  <button class="plain gap-undo d-flex align-items-center" aria-label="Undo"><svg width="28" height="18" fill="#545454"><path d="M10 0V5Q28 4 28 18H26Q24 11 10 13V17L0 8Z"/></svg><span class="tri tri-apart"></span></button>
  <button class="plain gap-redo d-flex align-items-center" aria-label="Redo"><svg width="28" height="18" fill="#8c8c8c"><path d="M18 0V5Q0 4 0 18H2Q4 11 18 13V17L28 8Z"/></svg><span class="tri tri-faint tri-apart"></span></button>

  <button class="plain ms-auto" aria-label="Record"><svg width="26" height="26"><circle cx="13" cy="13" r="11.500" fill="#efefef" stroke="#626262" stroke-width="3"/><circle cx="13" cy="13" r="5.500" fill="#e41b0c"/></svg></button>
  <button class="plain gap-undo" aria-label="Job status"><svg width="26" height="26" fill="none" stroke="#434343" stroke-width="3"><circle cx="13" cy="13" r="11.500"/><path d="M13 6V13.500H20"/></svg></button>
  <button class="plain gap-file d-flex align-items-center">Jonathan Odom<span class="tri tri-apart"></span></button>
  <button class="plain gap-undo d-flex align-items-center" aria-label="Help"><svg width="27" height="27"><circle cx="13.500" cy="13.500" r="13.500" fill="#6c6c6c"/><path d="M9 10Q9 5.500 13.500 5.500T18 10Q18 12 15.500 13.500Q13.500 15 13.500 17.500" fill="none" stroke="#e4e4e4" stroke-width="3.500"/><circle cx="13.500" cy="21.500" r="2.200" fill="#e4e4e4"/></svg><span class="tri ms-2"></span></button>
</header>

<nav class="doc-tabs d-flex align-items-stretch" aria-label="Documents">
  <div class="doc-tab d-flex align-items-center"><svg class="cube" width="13" height="14"><use href="#cube12"/></svg><a href="#">Double P...ulum v2*</a><span class="sync ms-auto"></span><button class="plain close-x" aria-label="Close"><svg width="17" height="17"><use href="#xmark"/></svg></button></div>
  <div class="doc-tab d-flex align-items-center"><svg class="cube" width="13" height="14"><use href="#cube12"/></svg><a href="#">G2r2_ma..._BA v41</a><span class="sync ms-auto"></span><button class="plain close-dark" aria-label="Close"><svg width="17" height="17"><use href="#xmark"/></svg></button></div>
  <div class="doc-tab d-flex align-items-center"><svg class="cube" width="13" height="14"><use href="#cube12"/></svg><a href="#">Merry Go Round v5*</a><span class="sync ms-auto"></span><button class="plain close-x" aria-label="Close"><svg width="17" height="17"><use href="#xmark"/></svg></button></div>
  <div class="doc-tab d-flex align-items-center"><svg class="cube" width="13" height="14"><use href="#cube12"/></svg><a href="#">Art Spinner v1*</a><span class="sync ms-auto"></span><button class="plain close-x" aria-label="Close"><svg width="17" height="17"><use href="#xmark"/></svg></button></div>
  <div class="doc-tab current d-flex align-items-center"><svg class="cube" width="13" height="14"><use href="#cube12"/></svg><a href="#" aria-current="page">Art Spi...emo v1*</a><span class="sync ms-auto"></span><button class="plain close-x" aria-label="Close"><svg width="17" height="17"><use href="#xmark"/></svg></button></div>
  <button class="plain new-tab" aria-label="New tab"><svg width="19" height="19"><path d="M9.500 0V19M0 9.500H19" stroke="currentColor" stroke-width="3"/></svg></button>
</nav>

<main class="stage flex-grow-1 d-flex flex-column position-relative">
  <svg class="model" width="766" height="540" viewBox="800 506 766 540" role="img" aria-label="Spinner model">
    <ellipse cx="1184" cy="1007" rx="363" ry="32" fill="#bcbcbc"/>
    <use href="#disc" y="368"/>
    <ellipse cx="1184" cy="915" rx="315" ry="28" fill="url(#gFace)" stroke="#1a1a1a"/>
    <path d="M942 915Q955 910 960 900H1408Q1414 910 1426 915C1420 930 1310 937 1184 937S948 930 942 915Z" fill="url(#gStem)" stroke="#111" stroke-width=".8"/>
    <path d="M844 874 858 888C880 906 1010 914 1184 914S1488 906 1510 888L1523 874Z" fill="#57534b" stroke="#33312d"/>
    <path d="M844 680V874C860 896 1010 904 1184 904S1508 896 1523 874V680Z" fill="url(#gWall)"/>
    <path d="M844 874C860 896 1010 904 1184 904S1508 896 1523 874" fill="none" stroke="#161616" stroke-width="1.500"/>
    <path d="M844 680 857 668H1511L1523 680C1508 703 1350 711 1184 711S860 703 844 680Z" fill="url(#gChamfer)" stroke="#161616" stroke-width="1.200"/>
    <ellipse cx="1184" cy="670" rx="328" ry="28" fill="url(#gFace)" stroke="#161616" stroke-width="1.200"/>
    <ellipse cx="1184" cy="670" rx="253" ry="21" fill="#8f918e" stroke="#222"/>
    <path d="M960 655 974 673V680C1010 688 1100 690 1184 690S1360 688 1394 680V673L1408 655Z" fill="url(#gStem)"/>
    <use href="#disc"/>
    <ellipse cx="1184" cy="548" rx="302" ry="27" fill="url(#gBowl)"/>
    <path d="M882 548A302 27 0 0 1 1486 548" fill="none" stroke="#161616" stroke-width="1.500"/>
    <path d="M882 548A302 27 0 0 0 1486 548" fill="none" stroke="#333" stroke-width="1" stroke-dasharray="7 3"/>
  </svg>

  <svg class="view-cube" width="163" height="150" viewBox="2212 107 163 150" role="img" aria-label="View cube" font-family="Noto Sans, sans-serif">
    <defs>
      <filter id="cubeShade"><feGaussianBlur stdDeviation="4"/></filter>
      <linearGradient id="cubeSide" x1="0" y1="0" x2="0" y2="1"><stop offset="0" stop-color="#ebebeb"/><stop offset="1" stop-color="#d3d3d3"/></linearGradient>
    </defs>
    <path d="M2240 238 2297 254 2352 238 2297 240Z" fill="#777" filter="url(#cubeShade)"/>
    <path d="M2238 153H2297V246L2238 231Z" fill="url(#cubeSide)"/><path d="M2297 153H2350V231L2297 246Z" fill="url(#cubeSide)"/>
    <path d="M2284 168H2306V225L2296 226 2285 224Z" fill="#cfd1da"/>
    <path d="M2238 231V153H2350V231L2297 244Z" fill="none" stroke="#8a8a8a" stroke-width="1.500" stroke-dasharray="11 4"/>
    <path d="M2232 232 2297 246" stroke="#74d874" stroke-width="3"/><path d="M2297 246 2357 231" stroke="#ea5c5c" stroke-width="3"/><path d="M2296.500 137V246" stroke="#6f6ce6" stroke-width="3"/>
    <text x="2252" y="201" font-size="13" font-weight="700" fill="#9a9da2">LEFT</text><text x="2302" y="201" font-size="13" font-weight="700" fill="#9a9da2">FRONT</text>
    <text x="2289" y="132" font-size="25" fill="#8080fb">Z</text><text x="2217" y="238" font-size="24" fill="#7dfa7d">Y</text><text x="2356" y="238" font-size="24" fill="#fb7d7d">X</text>
  </svg>

  <div class="ribbon d-flex position-relative">
    <button class="plain workspace d-flex align-items-center"><span class="grip"></span><span class="ms-auto">MODEL</span><span class="tri tri-apart me-auto"></span></button>
    <div class="tools w-sketch d-flex flex-column align-items-center">
      <div class="d-flex"><button class="plain tool" aria-label="Create sketch"><svg><use href="#newSketch"/></svg></button><button class="plain tool" aria-label="Fillet"><svg><use href="#filletLine"/></svg></button><button class="plain tool" aria-label="Line"><svg><use href="#lineTool"/></svg></button><button class="plain tool" aria-label="Rectangle"><svg><use href="#rectTool"/></svg></button><button class="plain tool" aria-label="Mirror"><svg><use href="#mirrorFlat"/></svg></button><button class="plain tool" aria-label="Trim"><svg><use href="#trimTool"/></svg></button></div>
      <button class="plain d-flex align-items-center gap-1">SKETCH<span class="tri"></span></button>
    </div>
    <div class="tools w-create d-flex flex-column align-items-center">
      <div class="d-flex"><button class="plain tool" aria-label="Extrude"><svg><use href="#extrude"/></svg></button><button class="plain tool" aria-label="Create form"><svg><use href="#form"/></svg></button><button class="plain tool" aria-label="Mirror bodies"><svg><use href="#mirror3d"/></svg></button></div>
      <button class="plain d-flex align-items-center gap-1">CREATE<span class="tri"></span></button>
    </div>
    <div class="tools w-modify d-flex flex-column align-items-center">
      <div class="d-flex"><button class="plain tool" aria-label="Press pull"><svg><use href="#pressPull"/></svg></button><button class="plain tool" aria-label="Align"><svg><use href="#pattern"/></svg></button><button class="plain tool" aria-label="Combine"><svg><use href="#combine"/></svg></button><button class="plain tool" aria-label="Fillet"><svg><use href="#fillet3d"/></svg></button><button class="plain tool" aria-label="Chamfer"><svg><use href="#chamfer3d"/></svg></button></div>
      <button class="plain d-flex align-items-center gap-1">MODIFY<span class="tri"></span></button>
    </div>
    <div class="tools w-pair d-flex flex-column align-items-center">
      <div class="d-flex"><button class="plain tool" aria-label="New component"><svg><use href="#component"/></svg></button><button class="plain tool" aria-label="Joint"><svg><use href="#joint"/></svg></button></div>
      <button class="plain d-flex align-items-center gap-1">ASSEMBLE<span class="tri"></span></button>
    </div>
    <div class="tools w-construct d-flex flex-column align-items-center">
      <button class="plain tool" aria-label="Offset plane"><svg><use href="#planes"/></svg></button>
      <button class="plain d-flex align-items-center gap-1">CONSTRUCT<span class="tri"></span></button>
    </div>
    <div class="tools w-inspect d-flex flex-column align-items-center">
      <button class="plain tool" aria-label="Measure"><svg><use href="#measure"/></svg></button>
      <button class="plain d-flex align-items-center gap-1">INSPECT<span class="tri"></span></button>
    </div>
    <div class="tools w-insert d-flex flex-column align-items-center">
      <button class="plain tool" aria-label="Insert image"><svg><use href="#picture"/></svg></button>
      <button class="plain d-flex align-items-center gap-1">INSERT<span class="tri"></span></button>
    </div>
    <div class="tools w-make d-flex flex-column align-items-center">
      <button class="plain tool" aria-label="3D print"><svg><use href="#printer"/></svg></button>
      <button class="plain d-flex align-items-center gap-1">MAKE<span class="tri"></span></button>
    </div>
    <div class="tools w-addins d-flex flex-column align-items-center">
      <button class="plain tool" aria-label="Scripts"><svg><use href="#script"/></svg></button>
      <button class="plain d-flex align-items-center gap-1">ADD–INS<span class="tri"></span></button>
    </div>
    <div class="tools w-pair d-flex flex-column align-items-center">
      <div class="d-flex"><button class="plain tool on" aria-label="Paint select"><svg><use href="#paint"/></svg></button><button class="plain tool" aria-label="Lasso"><svg><use href="#lasso"/></svg></button></div>
      <button class="plain d-flex align-items-center gap-1">SELECT<span class="tri"></span></button>
    </div>
  </div>

  <section class="browser-pane position-relative">
    <div class="palette d-flex align-items-center">
      <button class="plain palette-name" aria-label="Collapse"><svg width="17" height="11" fill="#222"><path d="M0 5.500 8 0V11ZM8 5.500 17 0V11Z"/></svg></button>
      <span>BROWSER</span>
      <button class="plain ms-auto" aria-label="Minimise"><svg width="17" height="17"><circle cx="8.500" cy="8.500" r="8" fill="#2a2a2a"/><path d="M4 8.500H13" stroke="#ccc" stroke-width="2"/></svg></button>
      <span class="grip"></span>
    </div>
    <div class="tree d-flex flex-column">
      <div class="tree-row d-flex align-items-center">
        <button class="plain twist-root" aria-label="Collapse"><svg width="13" height="12"><path d="M1 11.500H12V.5Z" fill="#666" stroke="#111" stroke-width="1.500"/></svg></button>
        <div class="root-chip d-flex align-items-center">
          <div class="root-name d-flex align-items-center"><span class="stripe c-violet"></span><span class="slot"><svg width="16" height="28"><use href="#bulbOn"/></svg></span><span class="slot"><svg width="25" height="24"><use href="#assembly"/></svg></span><span class="chip-text">(Unsaved)</span></div>
          <label class="root-end d-flex align-items-center justify-content-center"><input class="activate" type="radio" name="active" checked aria-label="Activate component"></label>
        </div>
      </div>
      <div class="tree-row kids d-flex align-items-center"><button class="plain twist" aria-label="Expand"><svg width="11" height="18"><use href="#twistShut"/></svg></button><div class="chip d-flex align-items-center"><span class="slot"><svg width="26" height="26" fill="#5a5a5a"><use href="#cog"/><circle cx="13" cy="13" r="3"/></svg></span><span class="chip-text">Document Settings</span></div></div>
      <div class="tree-row kids d-flex align-items-center"><button class="plain twist" aria-label="Expand"><svg width="11" height="18"><use href="#twistShut"/></svg></button><div class="chip d-flex align-items-center"><span class="slot"><svg width="26" height="22"><use href="#folder"/></svg></span><span class="chip-text">Named Views</span></div></div>
      <div class="tree-row kids d-flex align-items-center"><button class="plain twist" aria-label="Expand"><svg width="11" height="18"><use href="#twistShut"/></svg></button><div class="chip d-flex align-items-center"><span class="slot"><svg width="16" height="28"><use href="#bulbOff"/></svg></span><span class="slot"><svg width="26" height="22"><use href="#folder"/></svg></span><span class="chip-text">Origin</span></div></div>
      <div class="tree-row kids d-flex align-items-center"><button class="plain twist" aria-label="Expand"><svg width="11" height="18"><use href="#twistShut"/></svg></button><div class="chip d-flex align-items-center"><span class="stripe c-lime"></span><span class="slot"><svg width="16" height="28"><use href="#bulbOn"/></svg></span><span class="slot"><svg width="23" height="23"><use href="#box"/></svg></span><span class="chip-text">5972K91:1</span></div></div>
      <div class="tree-row kids d-flex align-items-center"><button class="plain twist" aria-label="Expand"><svg width="11" height="18"><use href="#twistShut"/></svg></button><div class="chip d-flex align-items-center"><span class="stripe c-orange"></span><span class="slot"><svg width="16" height="28"><use href="#bulbOff"/></svg></span><span class="slot"><svg width="23" height="23"><use href="#box"/></svg></span><span class="chip-text">DISC:1</span></div></div>
      <div class="tree-row kids d-flex align-items-center"><button class="plain twist" aria-label="Expand"><svg width="11" height="18"><use href="#twistShut"/></svg></button><div class="chip d-flex align-items-center"><span class="stripe c-blue"></span><span class="slot"><svg width="16" height="28"><use href="#bulbOn"/></svg></span><span class="slot"><svg width="23" height="23"><use href="#box"/></svg></span><span class="chip-text">Cap:1</span></div></div>
      <div class="tree-row kids d-flex align-items-center"><button class="plain twist" aria-label="Expand"><svg width="11" height="18"><use href="#twistShut"/></svg></button><div class="chip d-flex align-items-center"><span class="stripe c-blue"></span><span class="slot"><svg width="16" height="28"><use href="#bulbOn"/></svg></span><span class="slot"><svg width="23" height="23"><use href="#box"/></svg></span><span class="chip-text">Cap:2</span></div></div>
    </div>
  </section>

  <div class="dock mt-auto position-relative">
    <div class="palette d-flex align-items-center">
      <span class="palette-name"></span><span>COMMENTS</span>
      <button class="plain ms-auto" aria-label="Expand"><svg width="17" height="17"><circle cx="8.500" cy="8.500" r="8" fill="#2a2a2a"/><path d="M4 8.500H13M8.500 4V13" stroke="#ccc" stroke-width="2"/></svg></button>
      <span class="grip"></span>
    </div>
    <div class="d-flex">
      <div class="nav-strip d-flex align-items-center me-2">
        <button class="plain d-flex align-items-center" aria-label="Orbit"><svg viewBox="0 0 26 26"><path d="M5 11Q1 13 1 15Q3 20 13 20T25 15Q25 12 17 11.500" fill="none" stroke="#333" stroke-width="1.500"/><path d="M10 26V7H7.500L13 1 18.500 7H16V26Z" fill="url(#gSteel)" stroke="#555"/><path d="M4 16 10 14V20Z" fill="#333"/></svg><span class="tri tri-apart"></span></button>
        <button class="plain ms-1" aria-label="Look at"><svg viewBox="0 0 26 26"><path d="M4 7 10 3V7L19 3V8" fill="#ddd" stroke="#444"/><rect x="1.500" y="8.500" width="23" height="16" fill="#f2f2f2" stroke="#444"/><rect x="5" y="12" width="16" height="9" fill="url(#gSteel)" stroke="#333" stroke-width="1.500"/></svg></button>
        <button class="plain nav-step" aria-label="Pan"><svg viewBox="0 0 26 26"><path d="M8 25 2 15Q0 12 2 12 4 12 7 16L4 5Q5 2 7 4L10 12V2Q11 0 13 2L14 12 16 2Q18 0 19 3L18 13 22 7Q24 5 25 8L20 21 18 25Z" fill="#f6f6f6" stroke="#444"/></svg></button>
        <button class="plain nav-step" aria-label="Zoom"><svg viewBox="0 0 26 26"><path d="M16 16 24 24" stroke="#333" stroke-width="4" stroke-linecap="round"/><circle cx="10" cy="10" r="9" fill="#f0f8f8" stroke="#555" stroke-width="1.500"/><path d="M20 4H26M23 1V7M20 9.500H26" stroke="#333" stroke-width="1.300"/></svg></button>
        <button class="plain nav-step d-flex align-items-center" aria-label="Zoom window"><svg viewBox="0 0 26 26"><path d="M1 1H25V25H1Z" fill="none" stroke="#777" stroke-width="1.300" stroke-dasharray="5 3"/><path d="M16 16 24 24" stroke="#333" stroke-width="4" stroke-linecap="round"/><circle cx="9" cy="10" r="8.500" fill="#f0f8f8" stroke="#555" stroke-width="1.500"/></svg><span class="tri tri-apart"></span></button>
      </div>
      <div class="nav-strip d-flex align-items-center ms-1">
        <button class="plain d-flex align-items-center gap-1" aria-label="Display"><svg viewBox="0 0 26 26"><path d="M9 20H17L20 25H6Z" fill="#eee" stroke="#444"/><rect x="1" y="1" width="24" height="20" fill="#ececec" stroke="#444"/><rect x="4" y="3.500" width="18" height="14.500" fill="#7fa8da" stroke="#2c4c7c"/></svg><span class="tri"></span></button>
        <button class="plain ms-2 d-flex align-items-center gap-1" aria-label="Grid"><svg viewBox="0 0 26 26"><rect x="1" y="1" width="24" height="24" fill="url(#gSteel)" stroke="#333" stroke-width="1.500"/><path d="M5 1V25M9 1V25M13 1V25M17 1V25M21 1V25M1 5H25M1 9H25M1 13H25M1 17H25M1 21H25" stroke="#777"/></svg><span class="tri"></span></button>
        <button class="plain ms-2 d-flex align-items-center gap-1" aria-label="Viewports"><svg viewBox="0 0 26 26"><rect x="1" y="3" width="24" height="20" fill="#8db2e0" stroke="#34507c" stroke-width="1.500"/><path d="M13 3V23M1 13H25" stroke="#34507c" stroke-width="1.500"/><path d="M3.500 5.500H10.500V10.500H3.500ZM15.500 5.500H22.500V10.500H15.500ZM3.500 15.500H10.500V20.500H3.500ZM15.500 15.500H22.500V20.500H15.500Z" fill="none" stroke="#c6dcf4"/></svg><span class="tri"></span></button>
      </div>
    </div>
  </div>
</main>

<footer class="history d-flex">
  <div class="play d-flex align-items-start">
    <button class="plain" aria-label="To start"><svg width="20" height="24" fill="currentColor"><path d="M0 0H3V24H0ZM20 1V23L4 12Z"/></svg></button>
    <button class="plain" aria-label="Step back"><svg width="20" height="24" fill="currentColor"><path d="M0 12 15 1V23ZM17 6H20V18H17Z"/></svg></button>
    <button class="plain" aria-label="Play"><svg width="20" height="24" fill="currentColor"><path d="M0-1 20 12 0 25Z"/></svg></button>
    <button class="plain" aria-label="Step forward"><svg width="20" height="24" fill="currentColor"><path d="M20 12 5 1V23ZM0 6H3V18H0Z"/></svg></button>
    <button class="plain" aria-label="To end"><svg width="20" height="24" fill="currentColor"><path d="M17 0H20V24H17ZM0 1V23L16 12Z"/></svg></button>
  </div>
  <div class="timeline">
    <div class="bars d-flex"><div class="d-flex"><span class="c-violet w-50"></span><span class="c-lime w-50"></span></div><div class="c-violet"></div><div class="c-orange span-nine"></div><div class="c-violet"></div><div class="c-blue"></div><div class="c-blue"></div><div class="c-blue"></div><div class="c-blue"></div><div class="c-violet"></div></div>
    <div class="steps d-flex">
      <button class="plain" aria-label="Insert"><svg width="28" height="28"><use href="#tInsert"/></svg></button>
      <button class="plain" aria-label="Component"><svg width="28" height="28"><use href="#tBox"/></svg></button>
      <button class="plain" aria-label="Sketch"><svg width="28" height="28"><use href="#tSketch"/></svg></button>
      <button class="plain" aria-label="Extrude"><svg width="28" height="28"><use href="#tExtrude"/></svg></button>
      <button class="plain" aria-label="Extrude"><svg width="28" height="28"><use href="#tExtrude"/></svg></button>
      <button class="plain" aria-label="Fillet"><svg width="28" height="28"><use href="#tFillet"/></svg></button>
      <button class="plain" aria-label="Sketch"><svg width="28" height="28"><use href="#tSketch"/></svg></button>
      <button class="plain" aria-label="Extrude"><svg width="28" height="28"><use href="#tExtrude"/></svg></button>
      <button class="plain" aria-label="Pattern"><svg width="28" height="28"><use href="#tPattern"/></svg></button>
      <button class="plain" aria-label="Fillet"><svg width="28" height="28"><use href="#tFillet"/></svg></button>
      <button class="plain" aria-label="Fillet"><svg width="28" height="28"><use href="#tFillet"/></svg></button>
      <button class="plain" aria-label="Component"><svg width="28" height="28"><use href="#tBox"/></svg></button>
      <button class="plain" aria-label="Sketch"><svg width="28" height="28"><use href="#tSketch"/></svg></button>
      <button class="plain" aria-label="Revolve"><svg width="28" height="28"><use href="#tRevolve"/></svg></button>
      <button class="plain" aria-label="Shell"><svg width="28" height="28"><use href="#tShell"/></svg></button>
      <button class="plain" aria-label="Chamfer"><svg width="28" height="28"><use href="#tChamfer"/></svg></button>
      <button class="plain" aria-label="Move"><svg width="28" height="28"><use href="#tMove"/></svg></button>
    </div>
    <svg width="680" height="24" class="mt-1"><path d="M20 11H658M57 3V11M97 3V11M137 3V11M177 3V11M217 3V11M257 3V11M297 3V11M337 3V11M377 3V11M417 3V11M457 3V11M497 3V11M537 3V11M577 3V11M617 3V11M657 3V11" stroke="#666" stroke-width="3"/><rect x="6" y="2" width="16" height="16" rx="2" fill="#dfe3ea" stroke="#858a94" stroke-width="2"/><path d="M9.500 10H18.500M14 5.500V14.500" stroke="#111" stroke-width="2.500"/></svg>
    <svg class="marker" width="20" height="54"><path d="M0 0H19V6L11 15V54H8V15L0 6Z" fill="#666"/></svg>
  </div>
  <button class="plain gear-btn" aria-label="Timeline settings"><svg width="26" height="26" fill="#555"><use href="#cog"/><circle cx="13" cy="13" r="3"/></svg></button>
</footer>
<script src="https://cdn.jsdelivr.net/npm/bootstrap@5.3.0/dist/js/bootstrap.bundle.min.js"></script>
</body>
</html>
